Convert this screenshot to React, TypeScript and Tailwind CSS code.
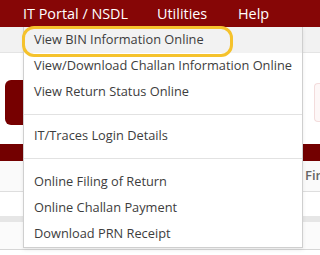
import React from "react";

const menuGroups: string[][] = [
  [
    "View BIN Information Online",
    "View/Download Challan Information Online",
    "View Return Status Online",
  ],
  ["IT/Traces Login Details"],
  ["Online Filing of Return", "Online Challan Payment", "Download PRN Receipt"],
];

export default function App() {
  return (
    <div className="relative h-[255px] w-[320px] overflow-hidden bg-white font-['Open_Sans',sans-serif]">
      {/* Top nav */}
      <nav className="flex h-[27px] items-center bg-[#860606] pl-[23px] text-[14.4px] text-white">
        <span className="w-[134px]">IT Portal / NSDL</span>
        <span className="w-[81px]">Utilities</span>
        <span>Help</span>
      </nav>

      {/* Page behind the menu */}
      <div className="h-[26px] border-b border-[#e4e4e4] bg-[#f2f2f2]" />
      <div className="flex h-[27px]" />
      <div className="flex h-[45px] items-stretch justify-between">
        <div className="ml-[5px] w-[60px] rounded-[6px] bg-[#760000]" />
        <div className="mt-[3px] mb-[3px] w-[6px] rounded-l-[4px] border border-r-0 border-[#f3dcdc] bg-[#fdf7f7]" />
      </div>
      <div className="h-[19px]" />
      <div className="h-[17px] bg-[#730000]" />
      <div className="flex h-[31px] items-center border-b border-[#dedede] bg-[#fafafa]">
        <span className="ml-[305px] text-[13px] font-semibold text-[#666]">Fin</span>
      </div>
      <div className="h-[24px]" />
      <div className="h-[6px] bg-[#e6e6e6]" />
      <div className="h-[28px] border-b border-[#d6d6d6] bg-[#fbfbfb]" />

      {/* Dropdown */}
      <div className="absolute left-[23px] top-[27px] w-[280px] border border-t-0 border-[#cfcfcf] bg-white text-[12.8px] text-[#3d3d3d] shadow-[0_2px_4px_rgba(0,0,0,0.08)]">
        {menuGroups.map((group, gi) => (
          <div key={gi}>
            {gi > 0 && (
              <div className={gi === 1 ? "pt-[9px] pb-[8px]" : "pt-[9px] pb-[10px]"}>
                <div className="h-px bg-[#e2e2e2]" />
              </div>
            )}
            {group.map((item, ii) => (
              <div
                key={item}
                className={
                  "flex h-[26px] items-center pl-[10px] " +
                  (gi === 0 && ii === 0 ? "bg-[#f2f2f2]" : "")
                }
              >
                {item}
              </div>
            ))}
          </div>
        ))}
      </div>

      {/* Highlight ring */}
      <div className="absolute left-[22px] top-[26px] h-[31px] w-[211px] rounded-[12px] border-[3px] border-[#f5c22c]" />
    </div>
  );
}
